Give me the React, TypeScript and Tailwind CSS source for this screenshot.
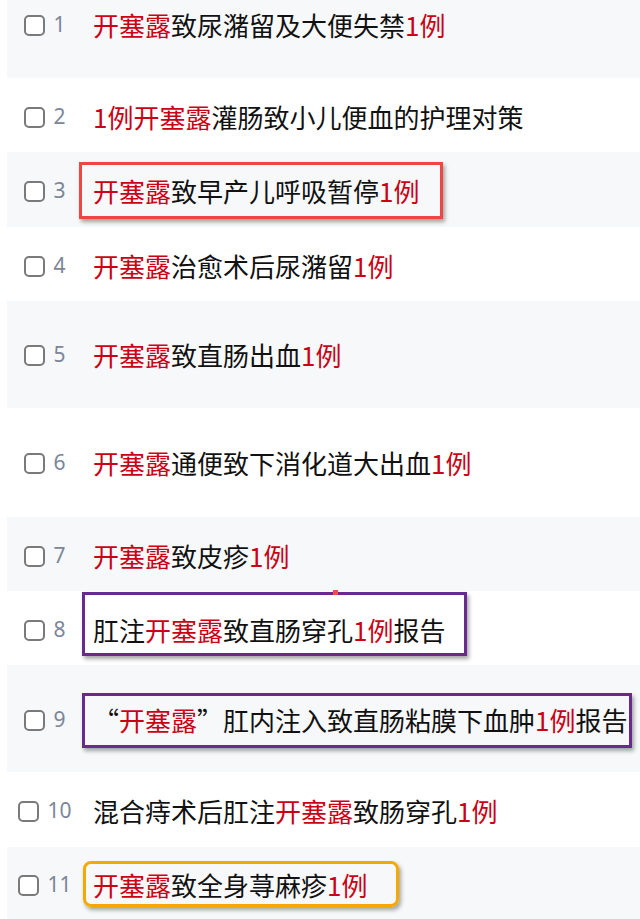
import React from "react";

type Seg = { t: string; r?: boolean };
type Row = {
  n: number;
  segs: Seg[];
  h: number;
  pt: number;
  gray: boolean;
  box?: React.ReactNode;
};

const R = (t: string): Seg => ({ t, r: true });
const B = (t: string): Seg => ({ t });

const rows: Row[] = [
  { n: 1, segs: [R("开塞露"), B("致尿潴留及大便失禁"), R("1例")], h: 78, pt: 10, gray: true },
  { n: 2, segs: [R("1例开塞露"), B("灌肠致小儿便血的护理对策")], h: 74, pt: 24, gray: false },
  {
    n: 3,
    segs: [R("开塞露"), B("致早产儿呼吸暂停"), R("1例")],
    h: 75,
    pt: 24,
    gray: true,
    box: (
      <div className="absolute left-[72px] top-[10px] w-[364px] h-[57px] border-[3px] border-[#f04545] shadow-[2px_3px_4px_rgba(0,0,0,0.35)] pointer-events-none" />
    ),
  },
  { n: 4, segs: [R("开塞露"), B("治愈术后尿潴留"), R("1例")], h: 74, pt: 24, gray: false },
  { n: 5, segs: [R("开塞露"), B("致直肠出血"), R("1例")], h: 107, pt: 39, gray: true },
  { n: 6, segs: [R("开塞露"), B("通便致下消化道大出血"), R("1例")], h: 109, pt: 40, gray: false },
  { n: 7, segs: [R("开塞露"), B("致皮疹"), R("1例")], h: 74, pt: 24, gray: true },
  {
    n: 8,
    segs: [B("肛注"), R("开塞露"), B("致直肠穿孔"), R("1例"), B("报告")],
    h: 74,
    pt: 24,
    gray: false,
    box: (
      <>
        <div className="absolute left-[75px] top-[1px] w-[385px] h-[64px] border-[3px] border-[#682a8f] shadow-[2px_3px_4px_rgba(0,0,0,0.35)] pointer-events-none" />
        <div className="absolute left-[326px] top-[-1px] w-[5px] h-[5px] bg-[#f04b4b]" />
      </>
    ),
  },
  {
    n: 9,
    segs: [B("“"), R("开塞露"), B("”肛内注入致直肠粘膜下血肿"), R("1例"), B("报告")],
    h: 107,
    pt: 40,
    gray: true,
    box: (
      <div className="absolute left-[75px] top-[28px] w-[550px] h-[55px] border-[3px] border-[#682a8f] shadow-[2px_3px_4px_rgba(0,0,0,0.35)] pointer-events-none" />
    ),
  },
  { n: 10, segs: [B("混合痔术后肛注"), R("开塞露"), B("致肠穿孔"), R("1例")], h: 75, pt: 24, gray: false },
  {
    n: 11,
    segs: [R("开塞露"), B("致全身荨麻疹"), R("1例")],
    h: 72,
    pt: 23,
    gray: true,
    box: (
      <div className="absolute left-[76px] top-[14px] w-[316px] h-[46px] rounded-[8px] border-[3px] border-[#f5a800] shadow-[2px_3px_4px_rgba(0,0,0,0.35)] pointer-events-none" />
    ),
  },
];

export default function App() {
  return (
    <div className="w-[640px] h-[919px] overflow-hidden bg-white">
      {rows.map((row) => (
        <div
          key={row.n}
          className={`relative ml-[7px] flex items-start ${row.gray ? "bg-[#f7f8fa]" : "bg-white"}`}
          style={{ height: row.h, paddingTop: row.pt }}
        >
          <div className="w-[76px] h-[30px] flex items-center justify-center gap-[8px] shrink-0">
            <div className="w-[21px] h-[21px] rounded-[5px] border-2 border-[#7a7a7a] bg-white shrink-0" />
            <span className="text-[21px] leading-[30px] text-[#7b8699] font-['Noto_Sans',sans-serif] -mt-[2px]">
              {row.n}
            </span>
          </div>
          <div className="ml-[10px] text-[26px] leading-[30px] whitespace-nowrap text-[#111] font-['Noto_Sans_CJK_SC',sans-serif]">
            {row.segs.map((s, i) => (
              <span key={i} className={s.r ? "text-[#cc0014]" : ""}>
                {s.t}
              </span>
            ))}
          </div>
          {row.box}
        </div>
      ))}
    </div>
  );
}
